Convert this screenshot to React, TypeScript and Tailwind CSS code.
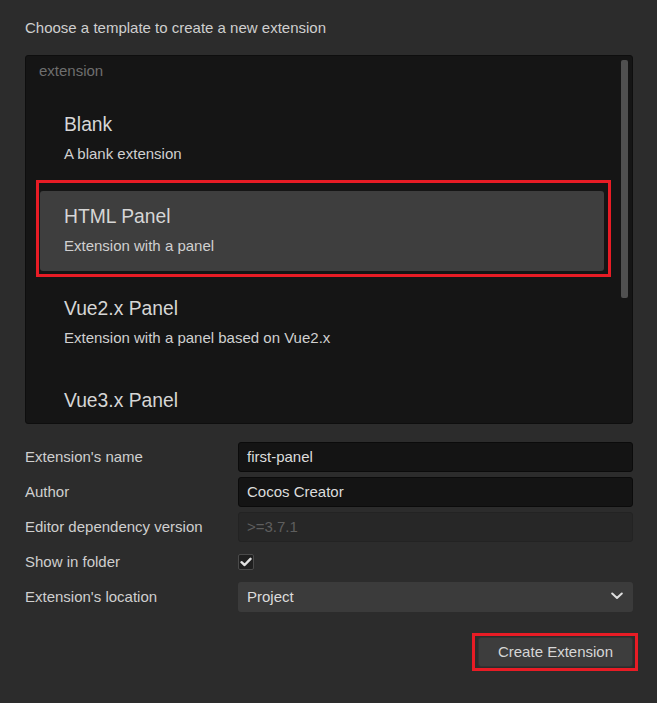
import React from "react";

const templates = [
  { title: "Blank", desc: "A blank extension" },
  { title: "HTML Panel", desc: "Extension with a panel", active: true },
  { title: "Vue2.x Panel", desc: "Extension with a panel based on Vue2.x" },
  // the description of this one sits below the fold of the list
  { title: "Vue3.x Panel", desc: "" },
];

function TemplateItem({ title, desc, active }: { title: string; desc: string; active?: boolean }) {
  return (
    <div
      className={
        "relative h-[80px] shrink-0 rounded-[3px] pl-[24px] pt-[14px] " +
        (active ? "bg-[#3e3e3e]" : "")
      }
    >
      <div className="text-[19.3px] leading-[24px] text-[#d6d6d6]">{title}</div>
      {desc && <div className="mt-[7px] text-[15px] leading-[20px] text-[#d0d0d0]">{desc}</div>}
      {active && (
        // annotation box drawn over the selected template
        <div className="pointer-events-none absolute top-[-11px] right-[-7px] bottom-[-6px] left-[-4px] border-[3px] border-[#e81c25]" />
      )}
    </div>
  );
}

function FieldLabel({ children }: { children: React.ReactNode }) {
  return <div className="flex h-[30px] items-center text-[15px] text-[#cfcfcf]">{children}</div>;
}

export default function App() {
  return (
    <div className="min-h-[703px] bg-[#2c2c2c] pr-[24px] pl-[25px] pt-[18px] font-['Liberation_Sans',Arial,sans-serif]">
      <p className="text-[15px] leading-[20px] text-[#cfcfcf]">Choose a template to create a new extension</p>

      {/* template list */}
      <div className="mt-[17px] flex h-[369px] overflow-hidden rounded-[3px] border border-[#0e0e0e] bg-[#151515]">
        <div className="mr-[17px] flex min-w-0 flex-1 flex-col pl-[13px]">
          <div className="pt-[5px] text-[15px] leading-[20px] text-[#6e6e6e]">extension</div>
          <div className="mt-[18px] ml-px flex flex-col gap-[12px]">
            {templates.map((t) => (
              <TemplateItem key={t.title} title={t.title} desc={t.desc} active={t.active} />
            ))}
          </div>
        </div>
        <div className="mt-[4px] mr-[4px] h-[238px] w-[7px] shrink-0 rounded-[2px] bg-[#505050]" />
      </div>

      {/* form */}
      <div className="mt-[18px] grid grid-cols-[213px_1fr] gap-y-[5px]">
        <FieldLabel>Extension's name</FieldLabel>
        <div className="flex h-[30px] items-center rounded-[3px] border border-[#0b0b0b] bg-[#141414] px-[8px] text-[15px] text-[#dcdcdc]">
          first-panel
        </div>

        <FieldLabel>Author</FieldLabel>
        <div className="flex h-[30px] items-center rounded-[3px] border border-[#0b0b0b] bg-[#141414] px-[8px] text-[15px] text-[#dcdcdc]">
          Cocos Creator
        </div>

        <FieldLabel>Editor dependency version</FieldLabel>
        <div className="flex h-[30px] items-center rounded-[3px] border border-[#232323] bg-[#272727] px-[8px] text-[15px] text-[#5e5e5e]">
          &gt;=3.7.1
        </div>

        <FieldLabel>Show in folder</FieldLabel>
        <div className="flex h-[30px] items-center">
          <div className="flex h-[16px] w-[16px] items-center justify-center rounded-[2px] border border-[#4a4a4a] bg-[#1f1f1f]">
            <svg width="12" height="10" viewBox="0 0 12 10">
              <path d="M1.5 5.2 L4.6 8 L10.5 1.8" fill="none" stroke="#e2e2e2" strokeWidth="2.4" strokeLinecap="round" strokeLinejoin="round" />
            </svg>
          </div>
        </div>

        <FieldLabel>Extension's location</FieldLabel>
        <div className="flex h-[30px] items-center justify-between rounded-[3px] bg-[#3b3b3b] pr-[10px] pl-[9px] text-[15px] text-[#dcdcdc]">
          <span>Project</span>
          <svg width="12" height="8" viewBox="0 0 12 8" className="-mt-[3px]">
            <path d="M1.2 1.5 L6 6 L10.8 1.5" fill="none" stroke="#dedede" strokeWidth="2" strokeLinecap="round" strokeLinejoin="round" />
          </svg>
        </div>
      </div>

      <div className="mt-[25px] flex justify-end">
        <div className="relative">
          <button className="h-[30px] w-[155px] rounded-[3px] border border-[#333333] bg-[#3d3d3d] text-[15px] text-[#d6d6d6]">
            Create Extension
          </button>
          <div className="pointer-events-none absolute top-[-4px] right-[-5px] bottom-[-4px] left-[-6px] border-[3px] border-[#e81c25]" />
        </div>
      </div>
    </div>
  );
}
